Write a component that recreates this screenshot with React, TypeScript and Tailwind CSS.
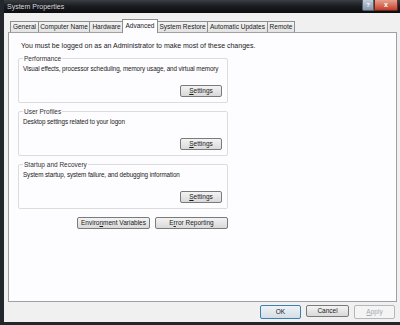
import React from "react"

const font = { fontFamily: '"Liberation Sans", Arial, sans-serif' }

const tabs = [
  { label: "General", w: "w-[28px]" },
  { label: "Computer Name", w: "w-[51px]" },
  { label: "Hardware", w: "w-[34px]" },
  { label: "Advanced", w: "w-[36px]", active: true },
  { label: "System Restore", w: "w-[50px]" },
  { label: "Automatic Updates", w: "w-[60px]" },
  { label: "Remote", w: "w-[28px]" },
]

const Btn = ({ children, w, tone = "normal" }: { children: React.ReactNode; w: string; tone?: "normal" | "default" | "disabled" }) => (
  <div
    className={`${w} flex items-center justify-center rounded-[2px] border bg-gradient-to-b ${
      tone === "default"
        ? "h-[14px] border-[#3c7fb1] from-[#eef3f7] to-[#d4dde5] text-[#1a1a1a]"
        : tone === "disabled"
        ? "h-[14px] border-[#b5b8bb] from-[#f4f4f4] to-[#f4f4f4] text-[#a8a8a8]"
        : "h-[12px] border-[#7a7a7a] from-[#f3f3f3] to-[#d9d9d9] text-[#1a1a1a]"
    } text-[6.5px] leading-none`}
  >
    {children}
  </div>
)

const Group = ({ title, desc }: { title: string; desc: string }) => (
  <div className="flex h-[45px] w-[210px] flex-col rounded-[2px] border border-[#dcdcdc]">
    <span className="-mt-[4px] ml-[4px] w-fit bg-[#fdfcfe] px-[1px] text-[6.5px] leading-[7px] text-[#333]">{title}</span>
    <p className="ml-[4px] mt-[3px] whitespace-nowrap text-[6.3px] leading-[7px] tracking-[-0.1px] text-[#1a1a1a]">{desc}</p>
    <div className="mr-[5px] mt-auto mb-[5px] flex justify-end">
      <Btn w="w-[42px]">
        <span><span className="underline">S</span>ettings</span>
      </Btn>
    </div>
  </div>
)

export default function App() {
  return (
    <div className="flex h-[325px] w-[400px] overflow-hidden bg-[#f0f0f0]" style={font}>
      <div className="w-[4px] bg-[#23272c]" />
      <div className="flex flex-1 flex-col">
        {/* title bar */}
        <div className="flex h-[13px] items-start bg-gradient-to-b from-[#3a3d42] via-[#181b20] to-[#0c0d10]">
          <span className="ml-[3px] mt-[3px] text-[7px] leading-none text-[#d8d8d8]">System Properties</span>
          <div className="ml-auto mr-[2px] flex">
            <div className="flex h-[11px] w-[12px] items-center justify-center rounded-bl-[2px] border border-t-0 border-[#55606c] bg-gradient-to-b from-[#c4cfdc] to-[#8696aa] text-[6px] font-bold text-white">
              ?
            </div>
            <div className="flex h-[11px] w-[24px] items-center justify-center rounded-br-[2px] border border-t-0 border-[#6b2a20] bg-gradient-to-b from-[#e6a090] to-[#c23c26] text-[7px] font-bold text-white">
              x
            </div>
          </div>
        </div>

        {/* body */}
        <div className="flex flex-1 flex-col pl-[4px] pr-[3px]">
          <div className="mt-[6px] flex items-end pl-[2px]">
            {tabs.map((t) =>
              t.active ? (
                <div
                  key={t.label}
                  className={`${t.w} relative z-10 -mb-px -mx-[1px] flex h-[14px] items-center justify-center border border-b-0 border-[#8e8f8f] bg-[#fdfcfe] text-[6.5px] leading-none text-[#1a1a1a]`}
                >
                  {t.label}
                </div>
              ) : (
                <div
                  key={t.label}
                  className={`${t.w} flex h-[11px] items-center justify-center border border-b-0 border-r-0 border-[#8e8f8f] bg-gradient-to-b from-[#f2f2f2] to-[#e3e3e3] text-[6.5px] leading-none text-[#1a1a1a] last:border-r`}
                >
                  {t.label}
                </div>
              )
            )}
          </div>

          {/* panel */}
          <div className="flex h-[270px] flex-col border border-[#a0a0a0] bg-[#fdfcfe] pl-[9px]">
            <p className="ml-[3px] mt-[9px] whitespace-nowrap text-[7px] leading-[7px] text-[#1a1a1a]">
              You must be logged on as an Administrator to make most of these changes.
            </p>
            <div className="mt-[9px] flex flex-col gap-[8px]">
              <Group title="Performance" desc="Visual effects, processor scheduling, memory usage, and virtual memory" />
              <Group title="User Profiles" desc="Desktop settings related to your logon" />
              <Group title="Startup and Recovery" desc="System startup, system failure, and debugging information" />
            </div>
            <div className="mt-[8px] flex w-[210px] justify-end gap-[5px]">
              <Btn w="w-[73px]">
                <span>Enviro<span className="underline">n</span>ment Variables</span>
              </Btn>
              <Btn w="w-[73px]">
                <span>E<span className="underline">r</span>ror Reporting</span>
              </Btn>
            </div>
          </div>

          {/* footer buttons */}
          <div className="mt-[3px] flex justify-end gap-[5px] pr-[2px]">
            <Btn w="w-[41px]" tone="default">OK</Btn>
            <Btn w="w-[43px]">
              <span>Cancel</span>
            </Btn>
            <Btn w="w-[41px]" tone="disabled">
              <span><span className="underline">A</span>pply</span>
            </Btn>
          </div>
        </div>
        <div className="h-[3px] bg-[#23272c]" />
      </div>
    </div>
  )
}
